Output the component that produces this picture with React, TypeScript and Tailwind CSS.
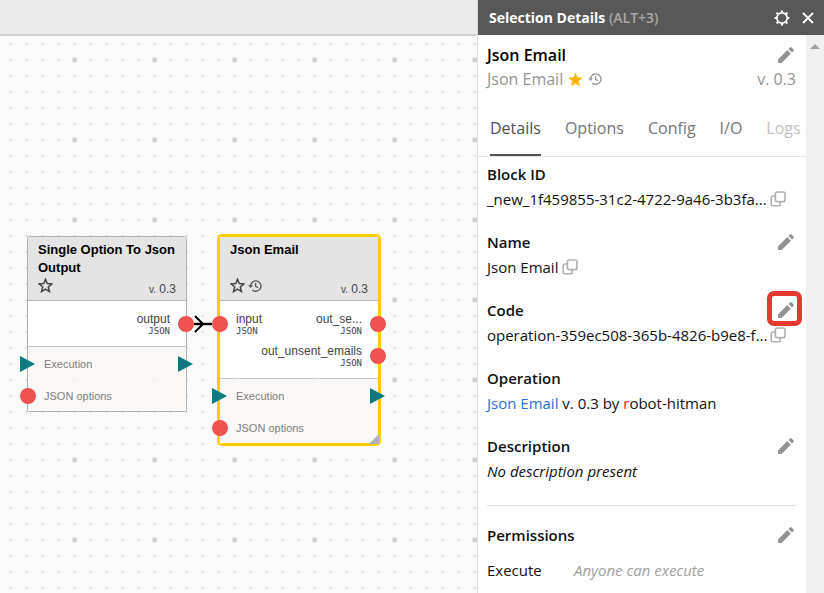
import type { ReactNode } from "react";

const panelFont = "font-['Open_Sans','Noto_Sans',sans-serif]";
const nodeFont = "font-['Liberation_Sans',Arial,sans-serif]";

function Pencil() {
  return (
    <svg width="16" height="16" viewBox="0 0 16 16" fill="#949494" aria-hidden="true">
      <path d="M0 12.4 9.3 3.1l3.6 3.6L3.6 16H0z" />
      <path d="M10.4 2 12 .5q.8-.8 1.6 0l1.9 1.9q.8.8 0 1.6L14 5.6z" />
    </svg>
  );
}

function CopyIcon() {
  return (
    <svg width="16" height="16" viewBox="0 0 16 16" fill="none" stroke="#b0b0b0" strokeWidth="1.6" aria-hidden="true">
      <rect x="5.4" y="1" width="9.6" height="9.6" rx="1.8" />
      <path d="M5.2 5H3q-1.8 0-1.8 1.8v6.2q0 1.8 1.8 1.8h5.4q1.8 0 1.8-1.8v-2.2" />
    </svg>
  );
}

function HistoryIcon({ color }: { color: string }) {
  return (
    <svg width="14" height="14" viewBox="0 0 14 14" fill="none" stroke={color} strokeWidth="1.3" aria-hidden="true">
      <path d="M2.6 7A5.2 5.2 0 1 1 4.3 10.9" />
      <path d="M.2 6.3h4.8L2.6 9z" fill={color} stroke="none" />
      <path d="M7.6 4v3.3l2.4 1.4" />
    </svg>
  );
}

function Star({ filled }: { filled?: boolean }) {
  return (
    <svg
      width="15"
      height="15"
      viewBox="0 0 14 14"
      fill={filled ? "#ffb000" : "none"}
      stroke={filled ? "#ffb000" : "#444"}
      strokeWidth={filled ? "0.6" : "1.4"}
      aria-hidden="true"
    >
      <path d="M7 1.2 8.6 5.2l4.4.3-3.4 2.9 1.1 4.3L7 10.4l-3.7 2.3 1.1-4.3L1 5.5l4.4-.3z" />
    </svg>
  );
}

function GridDots() {
  return (
    <svg className="absolute inset-0 h-full w-full" aria-hidden="true">
      <defs>
        <pattern id="minor" x="3" y="0" width="16" height="16" patternUnits="userSpaceOnUse">
          <rect x="6.6" y="6.8" width="2.2" height="2.2" fill="#dedede" />
        </pattern>
        <pattern id="major" x="35" y="-16" width="80" height="80" patternUnits="userSpaceOnUse">
          <rect x="37.4" y="37.6" width="4.6" height="4.6" rx="1" fill="#d0d0d0" />
        </pattern>
      </defs>
      <rect width="100%" height="100%" fill="url(#minor)" />
      <rect width="100%" height="100%" fill="url(#major)" />
    </svg>
  );
}

const portRows = {
  first: "top-[80px]",
  second: "top-[112px]",
  third: "top-[120px]",
  fourth: "top-[152px]",
  fifth: "top-[184px]",
};

type PortProps = { side: "left" | "right"; row: keyof typeof portRows };

function DataPort({ side, row }: PortProps) {
  return (
    <span
      className={`absolute size-4 rounded-full bg-[#ef5350] ${portRows[row]} ${side === "left" ? "-left-[7px]" : "-right-[7px]"}`}
    />
  );
}

function FlowPort({ side, row }: PortProps) {
  return (
    <svg
      width="16"
      height="16"
      viewBox="0 0 16 16"
      className={`absolute ${portRows[row]} ${side === "left" ? "-left-[7px]" : "-right-[7px]"}`}
      aria-hidden="true"
    >
      <path d="M0 0 15 8 0 16z" fill="#077b80" />
    </svg>
  );
}

function PortLabel({ name, right }: { name: string; right?: boolean }) {
  return (
    <div className={`flex h-8 min-w-0 flex-col ${right ? "items-end" : "items-start"}`}>
      <span className="text-[12px] leading-[14px] text-[#444]">{name}</span>
      <span className="font-['DejaVu_Sans_Mono',monospace] text-[9px] leading-[10px] text-[#444]">JSON</span>
    </div>
  );
}

function NodeHeader({ title, children }: { title: string; children: ReactNode }) {
  return (
    <div className="flex h-16 flex-col justify-between border-b border-[#b8b8b8] bg-[#e4e4e4] px-[10px] pt-1 pb-1">
      <h2 className="text-[13px] leading-[18px] font-bold text-black">{title}</h2>
      <div className="flex items-end justify-between">
        <div className="flex pb-[3px]">{children}</div>
        <span className="text-[12px] leading-3 text-[#444]">
          <small className="text-[10px]">v.</small> 0.3
        </span>
      </div>
    </div>
  );
}

function NodeFooter() {
  return (
    <div className="border-t border-[#c8c8c8] bg-[#f9f7f5]/90 px-4 text-[11px] text-[#808080]">
      <div className="flex h-8 items-center pt-[2px]">Execution</div>
      <div className="flex h-8 items-center pt-[2px]">JSON options</div>
    </div>
  );
}

function Canvas() {
  return (
    <main className={`relative flex-1 overflow-hidden bg-[#fafafa] ${nodeFont}`}>
      <GridDots />
      <article className="absolute top-[200px] left-[27px] w-[160px]">
        <div className="overflow-hidden rounded-[3px] border border-[#b0b0b0]">
          <NodeHeader title="Single Option To Json Output">
            <button aria-label="Add to favourites"><Star /></button>
          </NodeHeader>
          <div className="flex h-[45px] justify-end bg-white/90 px-4 pt-[11px]">
            <PortLabel name="output" right />
          </div>
          <NodeFooter />
        </div>
        <DataPort side="right" row="first" />
        <FlowPort side="left" row="third" />
        <FlowPort side="right" row="third" />
        <DataPort side="left" row="fourth" />
      </article>

      <article className="absolute top-[200px] left-[219px] w-[160px]">
        <div className="rounded-[3px] border border-[#ffcc00] outline-2 outline-[#ffcc00]">
          <NodeHeader title="Json Email">
            <button aria-label="Add to favourites"><Star /></button>
            <button aria-label="History" className="ml-[3px]"><HistoryIcon color="#555" /></button>
          </NodeHeader>
          <div className="h-[77px] bg-white/90 px-4 pt-[11px]">
            <div className="flex justify-between">
              <PortLabel name="input" />
              <PortLabel name="out_se..." right />
            </div>
            <PortLabel name="out_unsent_emails" right />
          </div>
          <NodeFooter />
        </div>
        <svg width="10" height="10" className="absolute right-0 bottom-0" aria-hidden="true">
          <path d="M10 0v10H0z" fill="#b0b0b0" />
        </svg>
        <DataPort side="left" row="first" />
        <DataPort side="right" row="first" />
        <DataPort side="right" row="second" />
        <FlowPort side="left" row="fourth" />
        <FlowPort side="right" row="fourth" />
        <DataPort side="left" row="fifth" />
      </article>

      <svg width="20" height="20" className="absolute top-[278px] left-[193px]" fill="none" stroke="#000" aria-hidden="true">
        <path d="M1 10h18" strokeWidth="2.4" />
        <path d="M2 2 10 10 2 18" strokeWidth="2" />
      </svg>
    </main>
  );
}

function EditButton({ label, marked }: { label: string; marked?: boolean }) {
  return (
    <button aria-label={label} className="relative mr-[2px]">
      <Pencil />
      {marked && (
        <span className="absolute -top-[11px] -left-[11px] size-[35px] rounded-[7px] border-5 border-[#e63a30]" />
      )}
    </button>
  );
}

function Section({ title, edit, marked, children }: { title: string; edit?: boolean; marked?: boolean; children: ReactNode }) {
  return (
    <section className="flex flex-col gap-px">
      <div className="flex h-6 items-center justify-between">
        <h3 className="text-[15px] font-semibold">{title}</h3>
        {edit && <EditButton label={`Edit ${title}`} marked={marked} />}
      </div>
      <div className="flex h-6 items-center text-[15px] whitespace-pre">{children}</div>
    </section>
  );
}

function CopyButton() {
  return (
    <button aria-label="Copy" className="shrink-0"><CopyIcon /></button>
  );
}

const tabs = ["Details", "Options", "Config", "I/O", "Logs"];

function DetailsPanel() {
  return (
    <aside className={`flex w-[347px] shrink-0 flex-col border-l border-[#dedede] bg-white text-[#111] ${panelFont}`}>
      <header className="flex h-[35px] shrink-0 items-center bg-[#585858] pr-[10px] pl-[11px] text-white">
        <h1 className="flex-1 text-[14px] font-bold">
          Selection Details <span className="font-semibold text-[#a8a8a8]">(ALT+3)</span>
        </h1>
        <button aria-label="Settings">
          <svg width="16" height="16" viewBox="0 0 16 16" fill="none" stroke="#fff" aria-hidden="true">
            <circle cx="8" cy="8" r="5.2" strokeWidth="1.7" />
            <path
              d="M8 .6v2M8 13.4v2M.6 8h2M13.4 8h2M2.6 2.6l1.5 1.5M11.9 11.9l1.5 1.5M2.6 13.4l1.5-1.5M11.9 4.1l1.5-1.5"
              strokeWidth="2.2"
            />
          </svg>
        </button>
        <button aria-label="Close" className="ml-3">
          <svg width="12" height="12" viewBox="0 0 12 12" stroke="#fff" strokeWidth="2" aria-hidden="true">
            <path d="M1 1l10 10M11 1 1 11" />
          </svg>
        </button>
      </header>

      <div className="flex min-h-0 flex-1">
        <div className="min-w-0 flex-1 overflow-hidden">
          <div className="flex flex-col pt-2 pr-[10px] pl-[9px]">
            <div className="flex h-6 items-center justify-between">
              <h2 className="text-[16px] font-semibold text-black">Json Email</h2>
              <EditButton label="Edit title" />
            </div>
            <div className="flex h-6 items-center text-[16px] text-[#949494]">
              Json Email
              <button aria-label="Favourite" className="ml-[5px]"><Star filled /></button>
              <button aria-label="History" className="ml-[5px]"><HistoryIcon color="#949494" /></button>
              <span className="ml-auto">v. 0.3</span>
            </div>
          </div>

          <nav className="mt-[10px] flex h-14 gap-6 overflow-hidden border-b border-[#e4e4e4] pl-3 text-[16px]" role="tablist">
            {tabs.map((tab) => (
              <button
                key={tab}
                role="tab"
                aria-selected={tab === "Details"}
                className={
                  tab === "Details"
                    ? "border-b-2 border-[#555] text-[#505050]"
                    : tab === "Logs"
                      ? "border-b-2 border-transparent text-[#c0c0c0]"
                      : "border-b-2 border-transparent text-[#757575]"
                }
              >
                {tab}
              </button>
            ))}
          </nav>

          <div className="pt-[5px] pr-[10px] pl-[9px]">
            <div className="flex flex-col gap-[19px]">
              <Section title="Block ID">
                <span className="w-[283px]">_new_1f459855-31c2-4722-9a46-3b3fa...</span>
                <CopyButton />
              </Section>
              <Section title="Name" edit>
                <span className="mr-1">Json Email</span>
                <CopyButton />
              </Section>
              <Section title="Code" edit marked>
                <span className="w-[283px]">operation-359ec508-365b-4826-b9e8-f...</span>
                <CopyButton />
              </Section>
              <Section title="Operation">
                <a href="#operation" className="text-[#2a6fdb]">Json Email</a> v. 0.3 by <span className="text-[#ff2020]">r</span>obot-hitman
              </Section>
              <Section title="Description" edit>
                <em>No description present</em>
              </Section>
            </div>

            <hr className="mt-[22px] border-[#dedede]" />

            <section className="pt-[17px]">
              <div className="flex h-6 items-center justify-between">
                <h3 className="text-[15px] font-semibold">Permissions</h3>
                <EditButton label="Edit Permissions" />
              </div>
              <div className="mt-[11px] flex h-6 items-center text-[15px]">
                <span className="w-[87px]">Execute</span>
                <em className="text-[#a0a0a0]">Anyone can execute</em>
              </div>
            </section>
          </div>
        </div>
        <div className="flex w-[18px] shrink-0 justify-center bg-[#f0f0f0] pt-[9px]">
          <svg width="10" height="5" aria-hidden="true">
            <path d="M0 5 5 0l5 5z" fill="#a0a0a0" />
          </svg>
        </div>
      </div>
    </aside>
  );
}

export default function App() {
  return (
    <div className="flex h-screen overflow-hidden">
      <div className="flex min-w-0 flex-1 flex-col">
        <div className="h-9 border-b-2 border-[#d0d0d0] bg-[#ebebeb]" />
        <Canvas />
      </div>
      <DetailsPanel />
    </div>
  );
}
